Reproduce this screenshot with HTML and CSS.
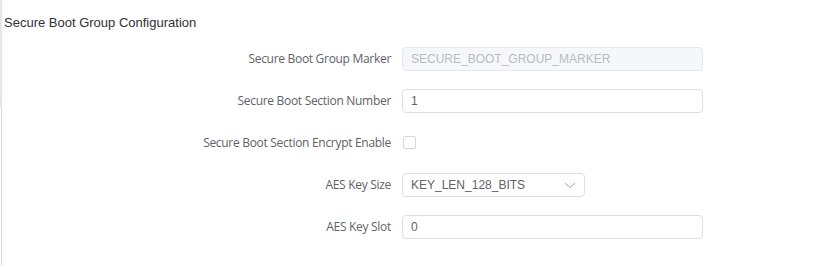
FILE: index.html
```html
<!DOCTYPE html>
<html>
<head>
<meta charset="utf-8">
<link rel="stylesheet" href="styles.css">
</head>
<body>
<div class="page">
  <div class="title">Secure Boot Group Configuration</div>
  <div class="form">
    <div class="row">
      <label class="label">Secure Boot Group Marker</label>
      <div class="control"><div class="input disabled">SECURE_BOOT_GROUP_MARKER</div></div>
    </div>
    <div class="row">
      <label class="label">Secure Boot Section Number</label>
      <div class="control"><div class="input">1</div></div>
    </div>
    <div class="row">
      <label class="label">Secure Boot Section Encrypt Enable</label>
      <div class="control"><span class="checkbox"></span></div>
    </div>
    <div class="row">
      <label class="label">AES Key Size</label>
      <div class="control">
        <div class="input select">
          <span>KEY_LEN_128_BITS</span>
          <svg class="arrow" width="12" height="7" viewBox="0 0 12 7"><path d="M1 1 L6 5.5 L11 1" fill="none" stroke="#c0c4cc" stroke-width="1.1"/></svg>
        </div>
      </div>
    </div>
    <div class="row">
      <label class="label">AES Key Slot</label>
      <div class="control"><div class="input">0</div></div>
    </div>
  </div>
</div>
</body>
</html>
```
FILE: styles.css
```css
html, body {
  margin: 0;
  padding: 0;
  background: #fff;
}
body {
  width: 826px;
  height: 268px;
  overflow: hidden;
  background-image:
    linear-gradient(#e4e4ea, #e4e4ea),
    linear-gradient(#dcdcdc, #dcdcdc);
  background-repeat: no-repeat;
  background-size: 2px 107px, 1px 158px;
  background-position: 0 0, 1px 107px;
}
.page {
  padding-top: 14px;
}
.title {
  font-family: "Liberation Sans", Arial, sans-serif;
  font-size: 13px;
  line-height: 18px;
  color: #303133;
  padding-left: 4px;
  margin-bottom: 15px;
}
.form {
  display: flex;
  flex-direction: column;
  gap: 18px;
}
.row {
  display: flex;
  align-items: center;
  height: 24px;
}
.label {
  width: 391px;
  padding-right: 11px;
  box-sizing: content-box;
  text-align: right;
  font-family: "Open Sans", "Noto Sans", sans-serif;
  font-size: 12px;
  letter-spacing: -0.3px;
  line-height: 24px;
  color: #606266;
  white-space: nowrap;
}
.control {
  display: flex;
  align-items: center;
}
.input {
  box-sizing: border-box;
  width: 301px;
  height: 24px;
  border: 1px solid #dcdfe6;
  border-radius: 4px;
  padding: 0 8px;
  font-family: "Liberation Sans", Arial, sans-serif;
  font-size: 12px;
  line-height: 22px;
  color: #606266;
  background: #fff;
}
.input.disabled {
  background: #f5f7fa;
  border-color: #e4e7ed;
  color: #b8bcc4;
}
.input.select {
  width: 183px;
  display: flex;
  align-items: center;
  justify-content: space-between;
  padding-right: 8px;
}
.arrow {
  display: block;
  margin-top: 1px;
}
.checkbox {
  display: block;
  box-sizing: border-box;
  width: 13px;
  height: 13px;
  border: 1px solid #d6d8e0;
  border-radius: 2px;
  background: #fff;
  margin-left: 1px;
  margin-top: -1px;
}
```
